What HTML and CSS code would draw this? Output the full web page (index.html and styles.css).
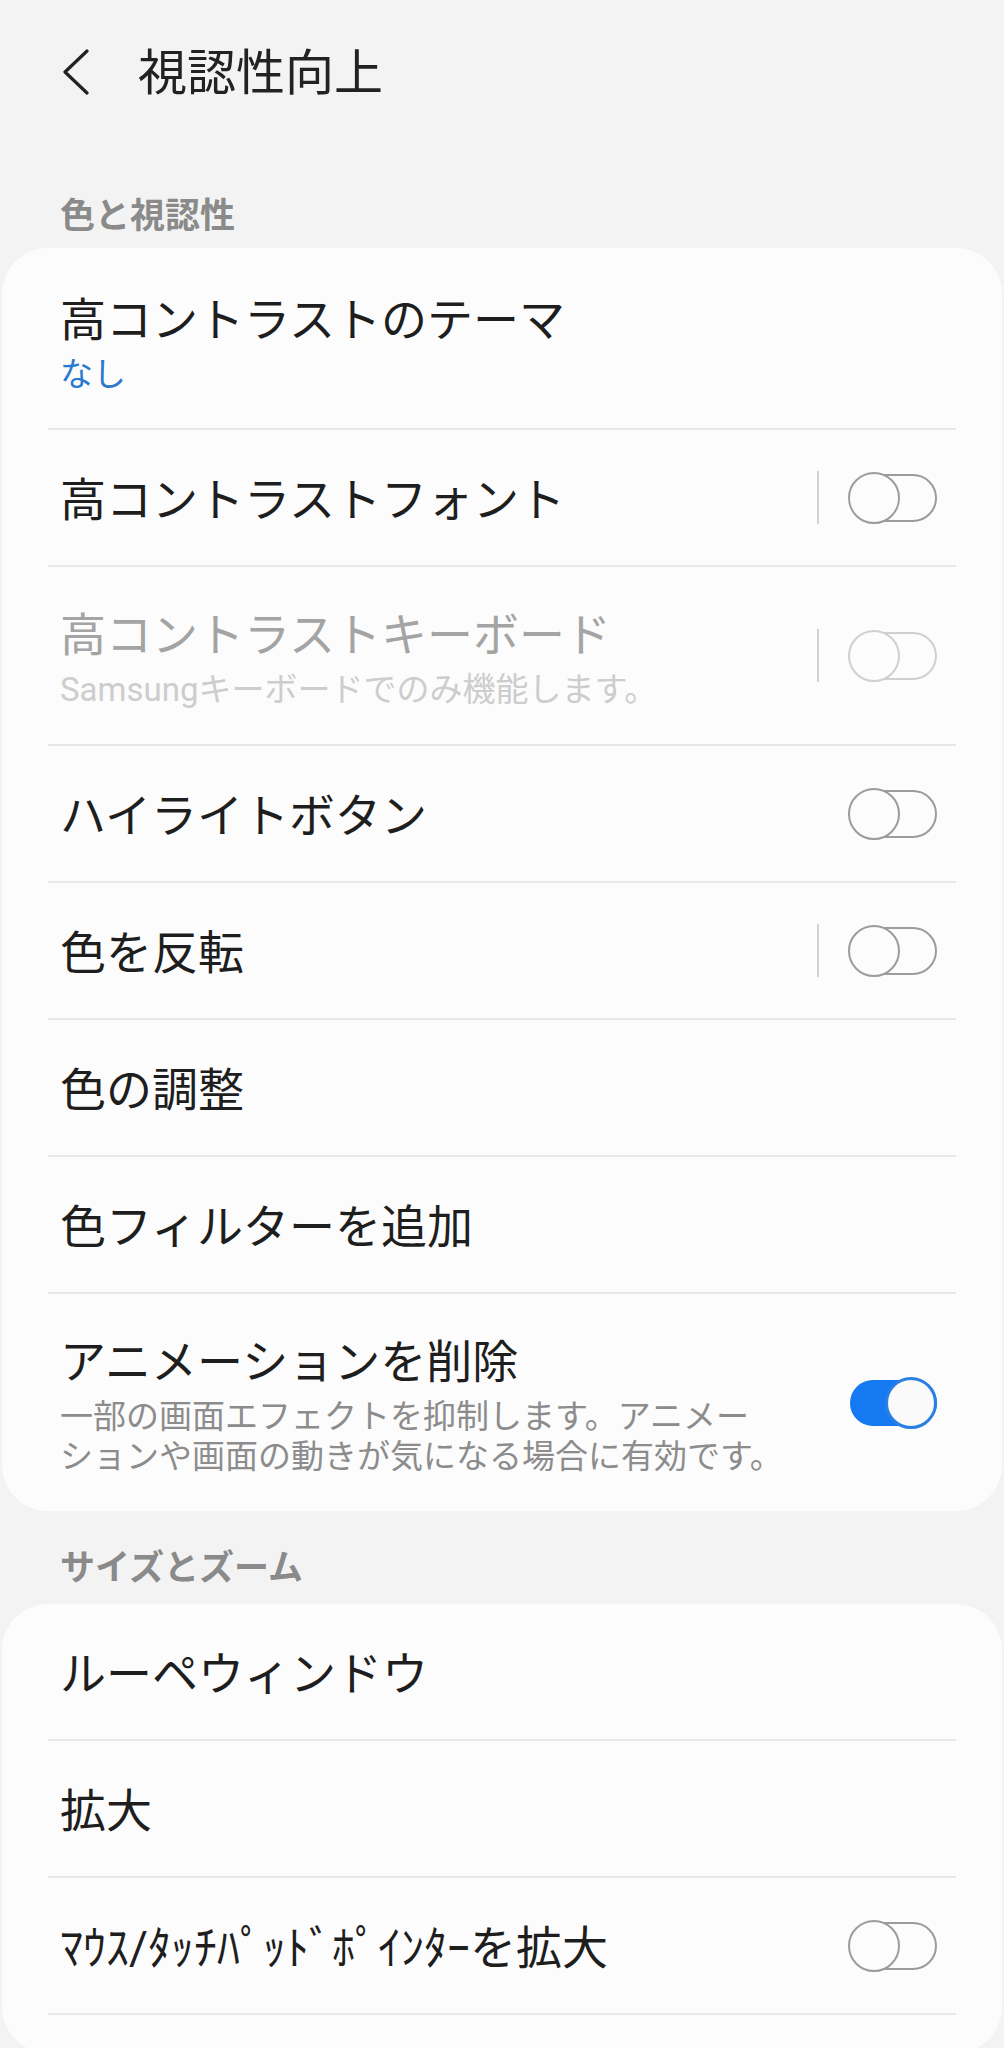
FILE: index.html
```html
<!DOCTYPE html>
<html lang="ja">
<head>
<meta charset="utf-8">
<title>視認性向上</title>
<link rel="stylesheet" href="styles.css">
</head>
<body>
<header class="appbar">
  <svg class="back" width="28" height="46" viewBox="0 0 28 46" aria-hidden="true">
    <polyline points="25,2 3,23 25,44" fill="none" stroke="#222" stroke-width="3.2" stroke-linecap="round" stroke-linejoin="round"/>
  </svg>
  <h1 class="title">視認性向上</h1>
</header>

<h2 class="section-label first">色と視認性</h2>
<section class="card">
  <div class="row two top">
    <div class="text">
      <div class="primary">高コントラストのテーマ</div>
      <div class="secondary accent">なし</div>
    </div>
  </div>
  <div class="row">
    <div class="text"><div class="primary">高コントラストフォント</div></div>
    <span class="vsep"></span>
    <span class="switch"><span class="thumb"></span></span>
  </div>
  <div class="row two disabled">
    <div class="text">
      <div class="primary">高コントラストキーボード</div>
      <div class="secondary">Samsungキーボードでのみ機能します。</div>
    </div>
    <span class="vsep"></span>
    <span class="switch"><span class="thumb"></span></span>
  </div>
  <div class="row">
    <div class="text"><div class="primary">ハイライトボタン</div></div>
    <span class="switch"><span class="thumb"></span></span>
  </div>
  <div class="row">
    <div class="text"><div class="primary">色を反転</div></div>
    <span class="vsep"></span>
    <span class="switch"><span class="thumb"></span></span>
  </div>
  <div class="row">
    <div class="text"><div class="primary">色の調整</div></div>
  </div>
  <div class="row">
    <div class="text"><div class="primary">色フィルターを追加</div></div>
  </div>
  <div class="row three last">
    <div class="text">
      <div class="primary">アニメーションを削除</div>
      <div class="secondary desc">一部の画面エフェクトを抑制します。アニメー<br>ションや画面の動きが気になる場合に有効です。</div>
    </div>
    <span class="switch on"><span class="thumb"></span></span>
  </div>
</section>

<h2 class="section-label second">サイズとズーム</h2>
<section class="card card-bottom">
  <div class="row">
    <div class="text"><div class="primary">ルーペウィンドウ</div></div>
  </div>
  <div class="row">
    <div class="text"><div class="primary">拡大</div></div>
  </div>
  <div class="row">
    <div class="text"><div class="primary">ﾏｳｽ/ﾀｯﾁﾊﾟｯﾄﾞﾎﾟｲﾝﾀｰを拡大</div></div>
    <span class="switch"><span class="thumb"></span></span>
  </div>
</section>
</body>
</html>
```

FILE: styles.css
```css
* { box-sizing: border-box; }

html, body {
  margin: 0;
  padding: 0;
}

body {
  background: #f3f3f3;
  font-family: Roboto, "Noto Sans CJK JP", sans-serif;
  color: #1e1e1e;
}

.appbar {
  height: 144px;
  display: flex;
  align-items: center;
  padding-left: 62px;
  padding-top: 4px;
}

.back {
  flex: none;
  display: block;
  margin-top: -4px;
}

.title {
  margin: 0 0 0 48px;
  font-size: 49px;
  font-weight: 400;
  line-height: 60px;
  color: #222;
}

.section-label {
  padding-left: 60px;
  padding-top: 3px;
  font-size: 35px;
  font-weight: 700;
  line-height: 48px;
  color: #8a8a8a;
}

.section-label.first {
  margin: 46px 0 7px 0;
}

.section-label.second {
  margin: 31px 0 11px 0;
}

.card {
  margin: 0 2px;
  background: #fcfcfc;
  border-radius: 46px;
}

.card-bottom {
  padding-bottom: 38px;
}

.row {
  margin: 0 46px;
  min-height: 137px;
  padding: 5px 19px 0 12px;
  display: flex;
  align-items: center;
  border-bottom: 2px solid #e8e8e8;
}

.row.two {
  min-height: 179px;
}

.row.two.top {
  min-height: 182px;
  padding-top: 10px;
}

.row.three {
  min-height: 217px;
}

.row.last {
  border-bottom: none;
}

.text {
  flex: 1;
  min-width: 0;
}

.primary {
  font-size: 46px;
  line-height: 56px;
  white-space: nowrap;
}

.secondary {
  margin-top: 7px;
  font-size: 33px;
  line-height: 40px;
  color: #8c8c8c;
}

.secondary.accent {
  color: #2b78d0;
}

.row.disabled .primary {
  color: #a4a4a4;
}

.row.disabled .secondary {
  color: #cdcdcd;
}

.vsep {
  flex: none;
  width: 2px;
  height: 53px;
  background: #d2d2d2;
  margin-right: 29px;
  margin-top: -5px;
}

.switch {
  flex: none;
  position: relative;
  width: 89px;
  height: 52px;
  margin-top: -5px;
}

.switch::before {
  content: "";
  position: absolute;
  left: 2px;
  right: 0;
  top: 2px;
  bottom: 2px;
  border: 2.5px solid #9c9c9c;
  border-radius: 24px;
}

.thumb {
  position: absolute;
  left: 0;
  top: 0;
  width: 52px;
  height: 52px;
  border-radius: 50%;
  border: 2.5px solid #9c9c9c;
  background: #fcfcfc;
}

.row.disabled .switch::before,
.row.disabled .thumb {
  border-color: #d0d0d0;
}

.switch.on::before {
  border-color: #1579f1;
  background: #1579f1;
  top: 3px;
  bottom: 3px;
}

.switch.on .thumb {
  left: auto;
  right: 0;
  border: 3px solid #2a80e2;
  background: #fafafa;
}
```
